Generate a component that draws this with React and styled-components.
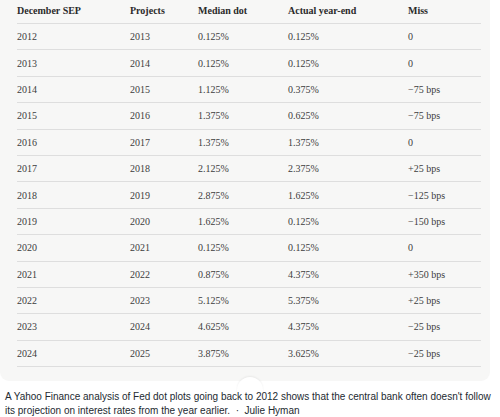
import React from "react";
import styled, { createGlobalStyle } from "styled-components";

const GlobalStyle = createGlobalStyle`
  html, body {
    margin: 0;
    padding: 0;
    background: #ffffff;
  }
  body {
    width: 500px;
    height: 417px;
    overflow: hidden;
  }
`;

const Figure = styled.figure`
  position: relative;
  margin: 0;
  width: 500px;
`;

const Panel = styled.div`
  width: 490px;
  height: 381px;
  box-sizing: border-box;
  padding: 0 9px 0 17px;
  background: #f7f7f6;
  border-radius: 0 0 9px 9px;
`;

const Table = styled.div`
  display: grid;
  grid-template-columns: 113px 68px 90px 120px 1fr;
  font-family: "Liberation Serif", "DejaVu Serif", serif;
  font-size: 10px;
  color: #3a3a3a;
`;

const Cell = styled.div`
  display: flex;
  align-items: center;
  height: ${(p) => (p.$head ? "24px" : "26.4px")};
  padding-bottom: ${(p) => (p.$head ? "3px" : "0")};
  box-sizing: border-box;
  border-bottom: 1px solid #dedede;
  font-weight: ${(p) => (p.$head ? 700 : 400)};
  color: ${(p) => (p.$head ? "#2b2b2b" : "#3d3d3d")};
  white-space: nowrap;
`;

const Bump = styled.div`
  position: absolute;
  left: 237px;
  top: 377px;
  width: 26px;
  height: 26px;
  border-radius: 50%;
  background: #ffffff;
  box-shadow: 0 -1px 2px rgba(0, 0, 0, 0.06);
`;

const Caption = styled.figcaption`
  position: relative;
  padding: 9px 4px 0 5px;
  font-family: "Liberation Sans", Arial, sans-serif;
  font-size: 10px;
  line-height: 14px;
  color: #232a31;
`;

const headers = ["December SEP", "Projects", "Median dot", "Actual year-end", "Miss"];

const rows = [
  ["2012", "2013", "0.125%", "0.125%", "0"],
  ["2013", "2014", "0.125%", "0.125%", "0"],
  ["2014", "2015", "1.125%", "0.375%", "\u221275 bps"],
  ["2015", "2016", "1.375%", "0.625%", "\u221275 bps"],
  ["2016", "2017", "1.375%", "1.375%", "0"],
  ["2017", "2018", "2.125%", "2.375%", "+25 bps"],
  ["2018", "2019", "2.875%", "1.625%", "\u2212125 bps"],
  ["2019", "2020", "1.625%", "0.125%", "\u2212150 bps"],
  ["2020", "2021", "0.125%", "0.125%", "0"],
  ["2021", "2022", "0.875%", "4.375%", "+350 bps"],
  ["2022", "2023", "5.125%", "5.375%", "+25 bps"],
  ["2023", "2024", "4.625%", "4.375%", "\u221225 bps"],
  ["2024", "2025", "3.875%", "3.625%", "\u221225 bps"],
];

export default function App() {
  return (
    <>
      <GlobalStyle />
      <Figure>
        <Panel>
          <Table>
            {headers.map((h) => (
              <Cell key={h} $head>
                {h}
              </Cell>
            ))}
            {rows.map((r) =>
              r.map((v, i) => <Cell key={r[0] + i}>{v}</Cell>)
            )}
          </Table>
        </Panel>
        <Bump />
        <Caption>
          {"A Yahoo Finance analysis of Fed dot plots going back to 2012 shows that the central bank often doesn't follow its projection on interest rates from the year earlier.\u00a0\u00a0·\u00a0\u00a0Julie Hyman"}
        </Caption>
      </Figure>
    </>
  );
}
